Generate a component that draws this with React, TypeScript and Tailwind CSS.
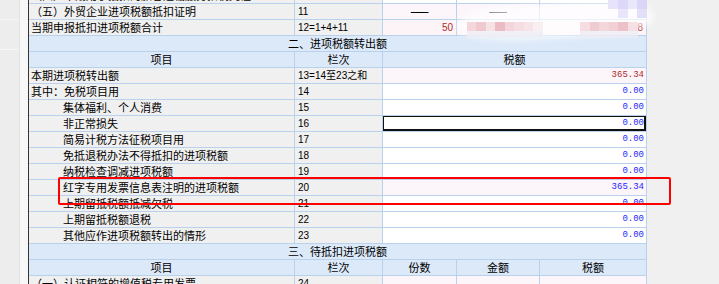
import React from 'react';

type Zhuanchu = {
  label: string;
  code: string;
  value: string;
  sub?: boolean;
  calc?: boolean;
  active?: boolean;
};

const zhuanchu: Zhuanchu[] = [
  { label: '其中：免税项目用', code: '14', value: '0.00' },
  { label: '集体福利、个人消费', code: '15', value: '0.00', sub: true },
  { label: '非正常损失', code: '16', value: '0.00', sub: true, active: true },
  { label: '简易计税方法征税项目用', code: '17', value: '0.00', sub: true },
  { label: '免抵退税办法不得抵扣的进项税额', code: '18', value: '0.00', sub: true },
  { label: '纳税检查调减进项税额', code: '19', value: '0.00', sub: true },
  { label: '红字专用发票信息表注明的进项税额', code: '20', value: '365.34', sub: true, calc: true },
  { label: '上期留抵税额抵减欠税', code: '21', value: '0.00', sub: true },
  { label: '上期留抵税额退税', code: '22', value: '0.00', sub: true },
  { label: '其他应作进项税额转出的情形', code: '23', value: '0.00', sub: true },
];

// mosaic left over from the blurred numbers in the screenshot
const mosaic = [
  'left-[467px] top-[22px] bg-[#f4d6db]',
  'left-[476px] top-[22px] bg-[#efc9d0]',
  'left-[486px] top-[22px] bg-[#f6e1e5]',
  'left-[495px] top-[22px] bg-[#ebbcc4]',
  'left-[505px] top-[22px] bg-[#f3d6dc]',
  'left-[514px] top-[22px] bg-[#f5dde2]',
  'left-[524px] top-[22px] bg-[#f7e4e8]',
  'left-[533px] top-[22px] bg-[#f9eef0]',
  'left-[580px] top-[22px] bg-[#f5dde1]',
  'left-[590px] top-[22px] bg-[#efcbd2]',
  'left-[599px] top-[22px] bg-[#f3d7dc]',
  'left-[609px] top-[22px] bg-[#f0cfd5]',
  'left-[618px] top-[22px] bg-[#ecc1c9]',
  'left-[628px] top-[22px] bg-[#f6e0e4]',
  'left-[608px] top-[0px] bg-[#e6e3fa]',
  'left-[618px] top-[0px] bg-[#dcd8f8]',
  'left-[628px] top-[0px] bg-[#e9e7fb]',
  'left-[637px] top-[0px] bg-[#dad6f7]',
  'left-[618px] top-[9px] bg-[#e9e6fb]',
  'left-[637px] top-[9px] bg-[#e2dff9]',
];

const grid = 'grid grid-cols-[266px_88px_74px_83px_107px]';
const cell =
  'h-[16px] overflow-hidden whitespace-nowrap border-b border-r border-[#b9d1ea] leading-[15px]';
const lbl = `${cell} bg-[#f0f0f0] pl-[2px] text-[11px] text-black`;
const code = `${cell} bg-[#f0f0f0] pl-[3px] font-['Liberation_Sans','Noto_Sans_CJK_SC',sans-serif] text-[10px] text-black`;
const head = `${cell} bg-[#dce9f9] text-center text-[11px] text-black`;
const num = "pr-[2px] text-right font-['Liberation_Mono',monospace] text-[9px]";
const dash = `${cell} bg-[#fcf6fb] text-center font-bold text-[11px] text-black`;

export default function App() {
  return (
    <div className="relative flex h-[284px] w-[719px] overflow-hidden bg-[#f0f0f0] font-['Noto_Sans_CJK_SC',sans-serif]">
      <div className="flex w-[20px] flex-col border-r border-[#e2e2e2] bg-[#ededed]">
        <div className="h-[20px] border-b border-[#f6f6f6]" />
        <div className="h-[30px] border-b border-[#f6f6f6]" />
      </div>
      <div className="w-[8px] bg-[#f7f7f7]" />

      <div className="w-[619px] border-l border-[#333333]">
        <div className="-mt-[12px]">
          {/* 一、申报抵扣的进项税额（尾部） */}
          <div className={grid}>
            <div className={lbl}>（四）本期用于抵扣的旅客运输服务扣税凭证</div>
            <div className={code}>10</div>
            <div className={`${cell} bg-white`} />
            <div className={`${cell} bg-white`} />
            <div className={`${cell} bg-white`} />
          </div>
          <div className={grid}>
            <div className={lbl}>（五）外贸企业进项税额抵扣证明</div>
            <div className={code}>11</div>
            <div className={dash}>——</div>
            <div className={dash}>——</div>
            <div className={`${cell} bg-[#fcf6fb] ${num} pr-[19px] text-[#1f1fff]`}>0</div>
          </div>
          <div className={grid}>
            <div className={lbl}>当期申报抵扣进项税额合计</div>
            <div className={code}>12=1+4+11</div>
            <div className={`${cell} bg-[#fdf4f8] pr-[3px] text-right font-['Liberation_Sans',sans-serif] text-[10px] text-[#b22a2a]`}>
              50
            </div>
            <div className={`${cell} bg-[#fdf4f8]`} />
            <div className={`${cell} bg-[#fdf4f8] pr-[3px] text-right font-['Liberation_Sans',sans-serif] text-[10px] text-[#b22a2a]`}>
              8
            </div>
          </div>

          {/* 二、进项税额转出额 */}
          <div className={grid}>
            <div className={`${head} col-span-5`}>二、进项税额转出额</div>
          </div>
          <div className={grid}>
            <div className={head}>项目</div>
            <div className={head}>栏次</div>
            <div className={`${head} col-span-3`}>税额</div>
          </div>
          <div className={grid}>
            <div className={lbl}>本期进项税转出额</div>
            <div className={code}>13=14至23之和</div>
            <div className={`${cell} col-span-3 bg-[#fcf5fa] ${num} text-[#b22a2a]`}>365.34</div>
          </div>
          {zhuanchu.map((r) => (
            <div key={r.code} className={grid}>
              <div className={r.sub ? `${lbl} pl-[34px]` : lbl}>{r.label}</div>
              <div className={code}>{r.code}</div>
              <div
                className={`${cell} relative col-span-3 ${r.calc ? 'bg-[#fcf5fa]' : 'bg-white'} ${num} text-[#1f1fff]`}
              >
                {r.active && (
                  <div className="absolute -left-px -top-px right-0 bottom-0 border-2 border-[#111111]" />
                )}
                {r.value}
              </div>
            </div>
          ))}

          {/* 三、待抵扣进项税额 */}
          <div className={grid}>
            <div className={`${head} col-span-5`}>三、待抵扣进项税额</div>
          </div>
          <div className={grid}>
            <div className={head}>项目</div>
            <div className={head}>栏次</div>
            <div className={head}>份数</div>
            <div className={head}>金额</div>
            <div className={head}>税额</div>
          </div>
          <div className={grid}>
            <div className={lbl}>（一）认证相符的增值税专用发票</div>
            <div className={code}>24</div>
            <div className={`${cell} bg-[#fcf5fa] text-center text-[11px] text-[#555555]`}>——</div>
            <div className={`${cell} bg-[#fcf5fa] text-center text-[11px] text-[#555555]`}>——</div>
            <div className={`${cell} bg-[#fcf5fa] text-center text-[11px] text-[#555555]`}>——</div>
          </div>
        </div>
      </div>
      <div className="flex-1 bg-[#f0f0f0]" />

      {/* blurred area over the totals */}
      <div className="pointer-events-none absolute left-[458px] top-[4px] h-[34px] w-[195px] -rotate-3 rounded-[40%] bg-white/70 blur-[3px]" />
      {mosaic.map((m) => (
        <div key={m} className={`pointer-events-none absolute h-[9px] w-[10px] ${m}`} />
      ))}
      <div className="pointer-events-none absolute left-[467px] top-[31px] h-[7px] w-[76px] bg-[#eeecf4]/80" />
      <div className="pointer-events-none absolute left-[580px] top-[31px] h-[7px] w-[58px] bg-[#eeecf4]/80" />

      {/* annotation box */}
      <div className="pointer-events-none absolute left-[58px] top-[177px] h-[28px] w-[613px] rounded-[2px] border-2 border-[#ff0000]" />
    </div>
  );
}
